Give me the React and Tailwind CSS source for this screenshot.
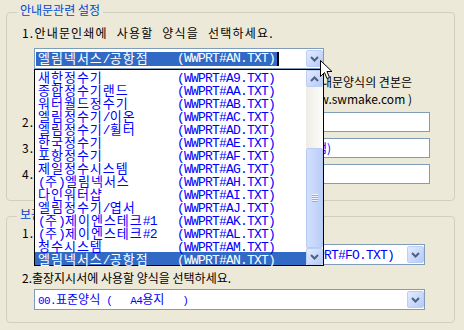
import React from "react";

const forms = [
  ["새한정수기", "A9"],
  ["종합정수기랜드", "AA"],
  ["워터월드정수기", "AB"],
  ["엘림정수기/이온", "AC"],
  ["엘림정수기/휠터", "AD"],
  ["한국정수기", "AE"],
  ["포항정수기", "AF"],
  ["제일정수시스템", "AG"],
  ["(주)엘림넥서스", "AH"],
  ["다인워터샵", "AI"],
  ["엘림정수기/엽서", "AJ"],
  ["(주)제이엔스테크#1", "AK"],
  ["(주)제이엔스테크#2", "AL"],
  ["청수시스템", "AM"],
  ["엘림넥서스/공항점", "AN"],
];

const HANGUL = /([\u3131-\u318E\uAC00-\uD7A3]+)/;

// 굴림체 흉내: 한글은 전각, 영숫자는 반각 고정폭
function Gulim({ text, small = false }) {
  return text
    .split(HANGUL)
    .filter(Boolean)
    .map((part, i) =>
      HANGUL.test(part) ? (
        <span key={i} className={small ? "text-[12px]" : "text-[13px] tracking-[1px]"}>
          {part}
        </span>
      ) : (
        <span
          key={i}
          className={
            small
              ? "font-['Liberation_Mono',monospace] text-[11px] tracking-[-0.6px]"
              : "font-['Liberation_Mono',monospace] text-[13px] tracking-[-0.8px]"
          }
        >
          {part}
        </span>
      )
    );
}

function Chevron({ up = false }) {
  return (
    <svg width="9" height="6" viewBox="0 0 9 6" className={up ? "rotate-180" : ""}>
      <path d="M1 1L4.5 4.5L8 1" fill="none" stroke="#4D6185" strokeWidth="2" />
    </svg>
  );
}

function ArrowButton({ up = false }) {
  return (
    <div className="flex h-[17px] w-[17px] shrink-0 items-center justify-center rounded-[2px] border border-[#BBCEF8] bg-linear-to-br from-[#E3EBFE] to-[#B6CAF7]">
      <Chevron up={up} />
    </div>
  );
}

function Combo({ className = "", children }) {
  return (
    <div className={"flex h-[21px] items-center border border-[#7F9DB9] bg-white pl-[1px] " + className}>
      <div className="flex min-w-0 flex-1 items-center overflow-hidden whitespace-pre leading-[14px]">
        {children}
      </div>
      <ArrowButton />
    </div>
  );
}

function Scrollbar() {
  return (
    <div className="flex w-[17px] flex-col bg-linear-to-r from-[#EEEDE5] to-[#FCFCF9]">
      <ArrowButton up />
      <div className="flex flex-1 flex-col justify-end">
        <div className="flex h-[100px] items-center justify-center rounded-[2px] border border-[#B8CBF7] bg-linear-to-r from-[#D3DFFD] to-[#BBCEF9]">
          <div className="flex flex-col">
            {[0, 1, 2, 3].map((i) => (
              <div key={i} className="h-[2px] w-[6px] border-b border-[#8CB0F8] bg-[#EEF4FE]" />
            ))}
          </div>
        </div>
      </div>
      <ArrowButton />
    </div>
  );
}

export default function App() {
  return (
    <div className="relative h-[330px] w-[464px] overflow-hidden bg-[#ECE9D8] pl-[6px] pt-[4px] font-['Noto_Sans_CJK_KR',sans-serif] text-[12px] text-black">
      {/* 안내문관련 설정 */}
      <fieldset className="h-[197px] w-[449px] rounded-[4px] border border-[#D0D0BF]">
        <legend className="ml-[10px] px-[3px] pb-[4px] text-[12px] leading-[12px] text-[#0046D5]">
          안내문관련 설정
        </legend>
        <div className="pl-[15px]">
          <p className="mt-[6px] leading-[14px] tracking-[1.2px] [word-spacing:5px]">
            1.안내문인쇄에 사용할 양식을 선택하세요.
          </p>
          <Combo className="ml-[12px] mt-[8px] w-[290px]">
            <span className="flex h-[14px] items-center bg-[#316AC5] px-[2px] text-white">
              <span className="inline-block w-[139px]">
                <Gulim text="엘림넥서스/공항점" />
              </span>
              <Gulim text="(WWPRT#AN.TXT)" />
            </span>
            <span className="h-[14px] w-[2px] bg-black" />
          </Combo>
          <div className="mt-[4px] pr-[42px] text-right leading-[17px]">
            <p>※ 안내문양식의 견본은</p>
            <p>홈페이지 참고 (www.swmake.com )</p>
          </div>
          <div className="mt-[5px] flex flex-col gap-[6px]">
            {["2.", "3.", "4."].map((label) => (
              <div key={label} className="flex h-[20px] items-center">
                <span className="tracking-[1px]">{label}</span>
                <div className="ml-auto mr-[24px] flex h-[20px] w-[230px] items-center border border-[#7F9DB9] bg-white text-[#0000FF]">
                  {label === "3." && <span className="inline-block w-[130px] text-right">(본점)</span>}
                </div>
              </div>
            ))}
          </div>
        </div>
      </fieldset>

      {/* 보관증관련 설정 */}
      <fieldset className="mt-[7px] h-[115px] w-[449px] rounded-[4px] border border-[#D0D0BF]">
        <legend className="ml-[10px] px-[3px] pb-[4px] text-[12px] leading-[12px] text-[#0046D5]">
          보관증관련 설정
        </legend>
        <div className="pl-[15px]">
          <p className="mt-[2px] leading-[14px] tracking-[1.2px] [word-spacing:5px]">
            1.보관증인쇄에 사용할 양식을 선택하세요.
          </p>
          <Combo className="ml-[12px] mt-[4px] w-[391px] text-[#0000FF]">
            <span className="pl-[2px]">
              <span className="inline-block w-[258px]">
                <Gulim text="01.보관증양식" />
              </span>
              <Gulim text="(WWPRT#FO.TXT)" />
            </span>
          </Combo>
          <p className="mt-[6px] leading-[14px]">2.출장지시서에 사용할 양식을 선택하세요.</p>
          <Combo className="ml-[12px] mt-[4px] w-[391px] text-[#0000FF]">
            <span className="pl-[2px]">
              <Gulim small text="00.표준양식 (   A4용지   )" />
            </span>
          </Combo>
        </div>
      </fieldset>

      {/* 펼쳐진 콤보 목록 */}
      <div className="absolute left-[34px] top-[69px] flex h-[197px] w-[290px] border border-black bg-white">
        <ul className="flex-1">
          {forms.map(([name, code], i) => (
            <li
              key={code}
              className={
                i === forms.length - 1
                  ? "h-[13px] whitespace-pre bg-[#316AC5] pl-[3px] leading-[13px] text-white"
                  : "h-[13px] whitespace-pre pl-[3px] leading-[13px] text-[#0000FF]"
              }
            >
              <span className="inline-block w-[139px]">
                <Gulim text={name} />
              </span>
              <Gulim text={`(WWPRT#${code}.TXT)`} />
            </li>
          ))}
        </ul>
        <Scrollbar />
      </div>

      {/* 마우스 커서 */}
      <svg className="absolute left-[320px] top-[60px]" width="13" height="20" viewBox="0 0 13 20">
        <path d="M0.5 0.5V16.5L4.5 12.5L7 18.5L9.5 17.5L7 11.5H12Z" fill="white" stroke="black" />
      </svg>
    </div>
  );
}
